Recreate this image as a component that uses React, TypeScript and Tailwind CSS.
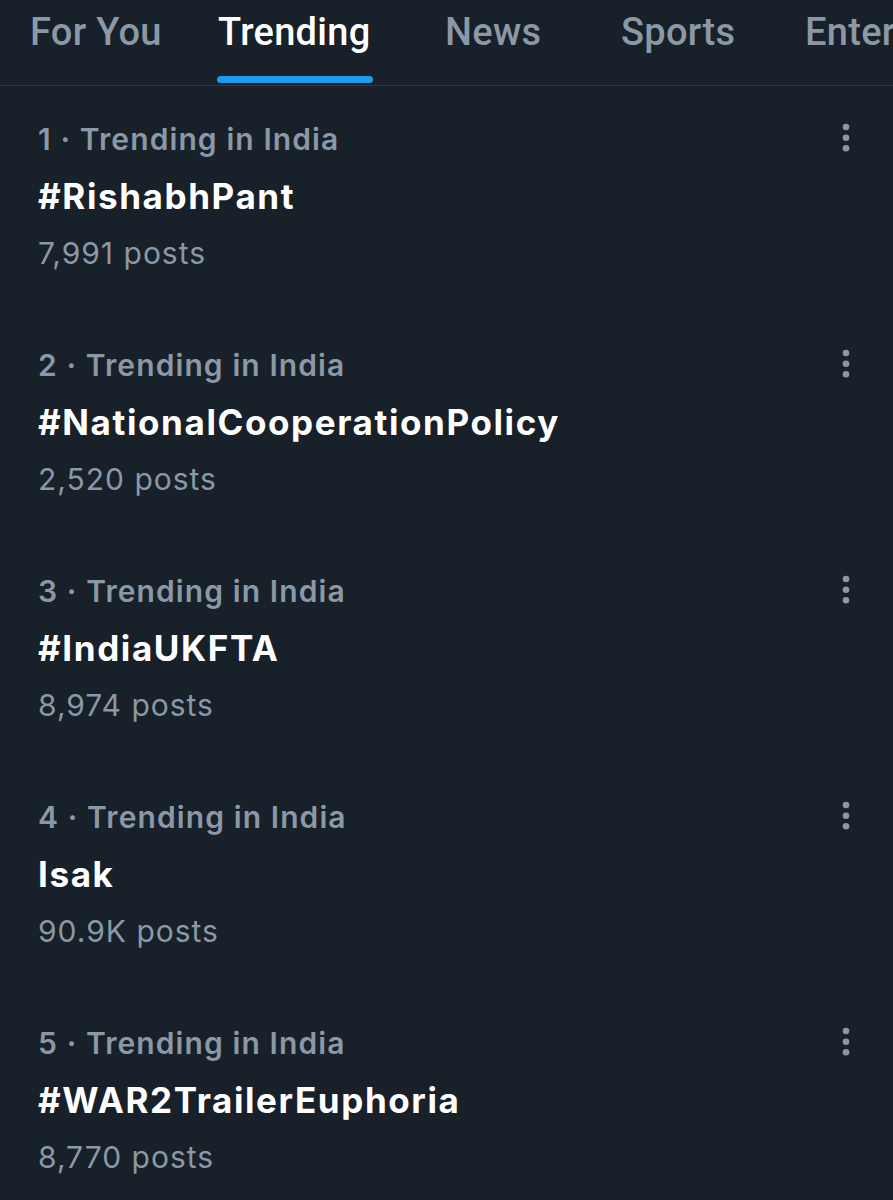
const tabs = [
  { label: 'For You', w: 'w-[188px]' },
  { label: 'Trending', w: 'w-[227px]', active: true },
  { label: 'News', w: 'w-[176px]' },
  { label: 'Sports', w: 'w-[184px]' },
  { label: 'Entertainment', w: 'w-[300px]' },
];

const trends = [
  { rank: 1, name: '#RishabhPant', posts: '7,991 posts' },
  { rank: 2, name: '#NationalCooperationPolicy', posts: '2,520 posts' },
  { rank: 3, name: '#IndiaUKFTA', posts: '8,974 posts' },
  { rank: 4, name: 'Isak', posts: '90.9K posts' },
  { rank: 5, name: '#WAR2TrailerEuphoria', posts: '8,770 posts' },
];

function MoreIcon() {
  return (
    <svg width="8" height="30" viewBox="0 0 8 30" className="text-[#8b98a5]">
      <circle cx="4" cy="4" r="3.3" fill="currentColor" />
      <circle cx="4" cy="14.7" r="3.3" fill="currentColor" />
      <circle cx="4" cy="25.3" r="3.3" fill="currentColor" />
    </svg>
  );
}

export default function App() {
  return (
    <div className="w-[893px] h-[1200px] overflow-hidden bg-[#18202a] font-['Inter',sans-serif]">
      <div className="flex h-[86px] pl-[30px] border-b border-[#2f3740] overflow-hidden whitespace-nowrap">
        {tabs.map((t) => (
          <div key={t.label} className={`${t.w} shrink-0`}>
            <div className="relative inline-block">
              <span
                className={`font-['Roboto',sans-serif] text-[38px] leading-[64px] font-medium tracking-[0.3px] ${
                  t.active ? 'text-white' : 'text-[#8b98a5]'
                }`}
              >
                {t.label}
              </span>
              {t.active && (
                <div className="absolute -left-[1px] w-[156px] top-[76px] h-[7px] rounded-full bg-[#1d9bf0]" />
              )}
            </div>
          </div>
        ))}
      </div>

      <div className="pt-[25px]">
        {trends.map((t) => (
          <div key={t.rank} className="flex justify-between pl-[38px] pr-[43px] h-[226px]">
            <div className="flex flex-col">
              <span className="text-[30px] leading-[57px] font-semibold tracking-[1.1px] text-[#8b98a5]">
                {t.rank} · Trending in India
              </span>
              <span className="text-[35px] leading-[57px] font-bold tracking-[1.6px] text-white">{t.name}</span>
              <span className="text-[30px] leading-[57px] tracking-[1px] text-[#8b98a5]">{t.posts}</span>
            </div>
            <div className="pt-[12px]">
              <MoreIcon />
            </div>
          </div>
        ))}
      </div>
    </div>
  );
}
